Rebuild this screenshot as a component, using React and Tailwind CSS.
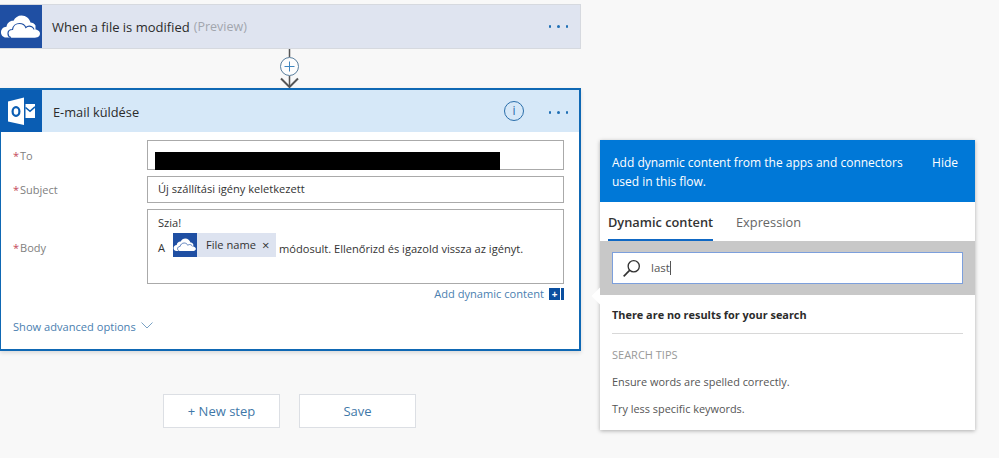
const font = { fontFamily: '"Open Sans", "Noto Sans", sans-serif' };

function OneDriveIcon({ size = 42 }) {
  return (
    <svg width={size} height={size} viewBox="0 0 42 42">
      <path d="M6 31.500C3 31.500 1 29 1 26.500C1 23.500 3 21 6.500 20.800C7 17 10 14.500 13.500 14.800C15 11.500 18 9.500 21.500 9.500C26 9.500 29.500 12.500 30.500 16.500C32.500 16.500 34.500 17.500 35.500 19.500L35.500 31.500Z" fill="#fff" />
      <path d="M12 31.500C9.500 31.500 8 29.500 8 27.500C8 25 10 23.500 12.500 23.500C13 20 16 17.500 19.500 17.500C22.500 17.500 24.800 19 25.800 21.500C27.500 20 30 19.800 31.800 20.800C33 21.500 33.800 22.500 34 23.500C37.500 23.300 40 25 40 27.700C40 30 38 31.500 36 31.500Z" fill="#fff" />
      <path d="M11 31.500C9 31 8 29.300 8 27.500C8 25 10 23.500 12.500 23.500C13 20 16 17.500 19.500 17.500C22.500 17.500 24.800 19 25.800 21.500C27.500 20 30 19.800 31.800 20.800C33 21.500 33.800 22.500 34 23.500" fill="none" stroke="#1f4fa3" strokeWidth="1.200" />
    </svg>
  );
}

function OutlookIcon() {
  return (
    <svg width="42" height="42" viewBox="0 0 42 42">
      <path d="M8 11.500 L24 7.500 V35 L8 31.500z" fill="#fff" />
      <path d="M25.500 14h9.500v14h-9.500z" fill="#fff" />
      <path d="M25.500 17.500l4.500 3.800 5-4.500" fill="none" stroke="#0a5db3" strokeWidth="1.600" />
      <ellipse cx="16" cy="21.500" rx="3.400" ry="4.300" fill="none" stroke="#0a5db3" strokeWidth="2.200" />
    </svg>
  );
}

function Dots({ className }) {
  return (
    <div className={`flex items-center gap-[6px] ${className}`}>
      <span className="h-[2.500px] w-[2.500px] rounded-full bg-[#1f6fb5]" />
      <span className="h-[2.500px] w-[2.500px] rounded-full bg-[#1f6fb5]" />
      <span className="h-[2.500px] w-[2.500px] rounded-full bg-[#1f6fb5]" />
    </div>
  );
}

function Label({ children, className = "" }) {
  return (
    <div className={`w-[146px] shrink-0 pl-[12px] text-[11px] text-[#808080] ${className}`}>
      <span className="mr-[1px] text-[#c4485a]">*</span>
      {children}
    </div>
  );
}

export default function App() {
  return (
    <div style={font} className="flex h-[458px] w-[999px] overflow-hidden bg-[#f8f8f8] text-[#333]">
      <div className="w-[600px] shrink-0">
        {/* trigger card */}
        <div className="mt-[4px] flex h-[45px] w-[581px] items-center border border-l-0 border-[#d6d9df] bg-[#dfe4f0]">
          <div className="flex h-[43px] w-[42px] shrink-0 items-center justify-center bg-[#1f4fa3]">
            <OneDriveIcon />
          </div>
          <span className="ml-[10px] pt-[2px] text-[13px] text-[#2b2b2b]">When a file is modified</span>
          <span className="ml-[4px] pt-[2px] text-[12.500px] text-[#a2a6ae]">(Preview)</span>
          <Dots className="ml-auto mr-[12px]" />
        </div>

        {/* connector */}
        <svg width="581" height="39" viewBox="0 0 581 39" className="block">
          <path d="M289.500 0v8" stroke="#555" strokeWidth="1.500" />
          <circle cx="289.500" cy="17.500" r="9" fill="#fdfdfd" stroke="#5a7f9e" strokeWidth="1" />
          <path d="M284.500 17.500h10M289.500 12.500v10" stroke="#3f86c0" strokeWidth="1" />
          <path d="M289.500 27v11" stroke="#555" strokeWidth="1.500" />
          <path d="M281 29.500l8.500 8.500 8.500-8.500" fill="none" stroke="#555" strokeWidth="2" />
        </svg>

        {/* action card */}
        <div className="flex h-[263px] w-[581px] flex-col border-2 border-l border-[#0f68b4] bg-white shadow-[0_2px_4px_rgba(0,0,0,0.12)]">
          <div className="-ml-px flex h-[42px] shrink-0 items-center bg-[#d6e8f8]">
            <div className="flex h-[42px] w-[42px] shrink-0 items-center justify-center bg-[#0a5db3]">
              <OutlookIcon />
            </div>
            <span className="ml-[11px] pt-[3px] text-[12.800px] text-[#2b2b2b]">E-mail küldése</span>
            <div className="ml-auto mr-[55px] flex h-[20px] w-[20px] items-center justify-center rounded-full border-[1.500px] border-[#2a6eaa] text-[12px] leading-none text-[#2a6eaa]">
              i
            </div>
          </div>
          <div className="relative flex-1 pr-[15px] pt-[8px]">
            <Dots className="absolute right-[11px] top-[-21px]" />
            <div className="flex h-[30px] items-center">
              <Label className="pt-[3px]">To</Label>
              <div className="h-[30px] flex-1 border border-[#aaa] bg-white pl-[7px] pt-[11px]">
                <div className="h-[18px] w-[345px] bg-black" />
              </div>
            </div>
            <div className="mt-[6px] flex h-[27px] items-center">
              <Label className="pt-[2px]">Subject</Label>
              <div className="flex h-[27px] flex-1 items-center border border-[#aaa] pl-[10px] text-[11.100px] text-[#333]">
                Új szállítási igény keletkezett
              </div>
            </div>
            <div className="mt-[6px] flex h-[75px] items-center">
              <Label className="pt-[3px]">Body</Label>
              <div className="h-[75px] flex-1 border border-[#aaa] pl-[10px] pt-[3px] text-[11.100px] text-[#333]">
                <div className="h-[19px] leading-[19px]">Szia!</div>
                <div className="mt-[1px] flex h-[24px] items-center">
                  <span className="mt-[7px] w-[15px]">A</span>
                  <div className="flex h-[24px] w-[103px] items-center bg-[#dde3f0]">
                    <div className="flex h-[24px] w-[24px] items-center justify-center bg-[#1f4fa3]">
                      <OneDriveIcon size={24} />
                    </div>
                    <span className="ml-[9px]">File name</span>
                    <span className="ml-[6px] text-[13px] leading-none">×</span>
                  </div>
                  <span className="ml-[3px] mt-[8px] whitespace-nowrap">módosult. Ellenőrizd és igazold vissza az igényt.</span>
                </div>
              </div>
            </div>
            <div className="flex h-[20px] items-center justify-end text-[11.100px] text-[#4a80b0]">
              <span>Add dynamic content</span>
              <div className="ml-[5px] flex h-[12px] w-[15px] items-center border-r-[3px] border-[#0a4fa0] bg-white">
                <div className="flex h-[12px] w-[11px] items-center justify-center bg-[#0a4fa0] text-[10px] font-bold leading-none text-white">
                  +
                </div>
              </div>
            </div>
            <div className="mt-[15px] flex items-center pl-[12px] text-[11.100px] text-[#4a80b0]">
              <span>Show advanced options</span>
              <svg width="12" height="7" viewBox="0 0 12 7" className="ml-[5px] -translate-y-[2px]">
                <path d="M.5.500l5.500 5.500 5.500-5.500" fill="none" stroke="#7aa2c4" strokeWidth="1" />
              </svg>
            </div>
          </div>
        </div>

        {/* step buttons */}
        <div className="ml-[163px] mt-[43px] flex gap-[19px]">
          <div className="flex h-[34px] w-[117px] items-center justify-center border border-[#dcdfe4] bg-white pt-[2px] text-[13px] text-[#3f78a8]">
            + New step
          </div>
          <div className="flex h-[34px] w-[117px] items-center justify-center border border-[#dcdfe4] bg-white pt-[2px] text-[13px] text-[#3f78a8]">
            Save
          </div>
        </div>
      </div>

      {/* dynamic content panel */}
      <div className="relative mt-[140px] h-[290px] w-[375px] bg-white shadow-[0_1px_4px_rgba(0,0,0,0.3)]">
        <div className="absolute left-[-6px] top-[150px] h-[12px] w-[12px] rotate-45 bg-white" />
        <div className="relative flex h-[62px] justify-between bg-[#0078d7] pl-[12px] pr-[17px] pt-[13px] text-[12px] leading-[19px] text-white">
          <div className="w-[310px]">Add dynamic content from the apps and connectors used in this flow.</div>
          <div>Hide</div>
        </div>
        <div className="flex h-[39px] items-start pl-[8px] pt-[11px] text-[12.800px]">
          <div className="flex h-[28px] w-[105px] justify-center border-b-2 border-[#0f68c4] font-semibold whitespace-nowrap text-[#333]">
            Dynamic content
          </div>
          <div className="ml-[23px] text-[#666]">Expression</div>
        </div>
        <div className="relative h-[54px] bg-[#c8c8c8] px-[12px] pt-[11px]">
          <div className="flex h-[32px] items-center border-[1.500px] border-[#7c9fdc] bg-white pl-[9px] text-[11.500px] text-[#555]">
            <svg width="19" height="19" viewBox="0 0 17 17">
              <circle cx="10.500" cy="6.500" r="5" fill="none" stroke="#333" strokeWidth="1.200" />
              <path d="M7 10L1.500 15.500" stroke="#333" strokeWidth="1.500" />
            </svg>
            <span className="ml-[10px]">last</span>
            <span className="h-[14px] w-px bg-[#555]" />
          </div>
        </div>
        <div className="relative px-[12px]">
          <div className="flex h-[39px] items-center border-b border-[#d8d8d8] pt-[2px] text-[10.900px] font-bold text-[#2b2b2b]">
            There are no results for your search
          </div>
          <div className="mt-[12px] text-[11px] leading-[18px] text-[#999]">SEARCH TIPS</div>
          <div className="mt-[9px] text-[10.900px] leading-[18px] text-[#555]">Ensure words are spelled correctly.</div>
          <div className="mt-[9px] text-[10.900px] leading-[18px] text-[#555]">Try less specific keywords.</div>
        </div>
      </div>
    </div>
  );
}
